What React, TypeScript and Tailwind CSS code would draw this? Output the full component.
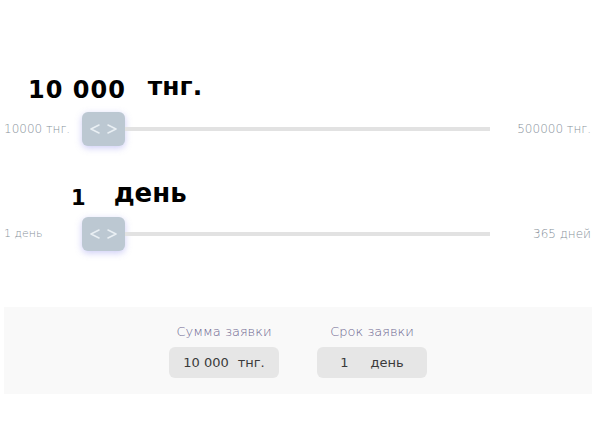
import React from "react";

const font = { fontFamily: "'DejaVu Sans', 'Open Sans', sans-serif" };

function Handle() {
  return (
    <div className="w-[43px] h-[34px] shrink-0 rounded-[6px] bg-[#bcc8d2] shadow-[0_2px_7px_rgba(110,110,230,0.35)] flex items-center justify-center">
      <svg width="28" height="10" viewBox="0 0 28 10" fill="none" stroke="#e9eff3" strokeWidth="1.6" strokeLinecap="round" strokeLinejoin="round">
        <polyline points="9,1 1,5 9,9" />
        <polyline points="18,1 26,5 18,9" />
      </svg>
    </div>
  );
}

function SliderRow({ left, right, leftSize }: { left: string; right: string; leftSize: string }) {
  return (
    <div className="flex items-center h-[34px]">
      <div className={`w-[82px] pl-[4px] ${leftSize} font-extralight text-[#87919a] whitespace-nowrap`}>{left}</div>
      <Handle />
      <div className="flex-1 h-[4px] bg-[#e2e2e2]" />
      <div className="w-[110px] pr-[9px] text-right text-[12px] font-extralight text-[#87919a] whitespace-nowrap">{right}</div>
    </div>
  );
}

export default function App() {
  return (
    <div className="w-[600px] h-[440px] bg-white overflow-hidden" style={font}>
      <div className="pt-[74px]">
        <div className="flex items-start h-[34px] pl-[28px] text-black font-bold">
          <span className="text-[24px] leading-[30px] pt-[1px] tracking-[1px]">10 000</span>
          <span className="text-[25px] leading-[26px] ml-[22px]">тнг.</span>
        </div>
        <div className="mt-[4px]">
          <SliderRow left="10000 тнг." right="500000 тнг." leftSize="text-[12px]" />
        </div>
        <div className="flex items-start h-[34px] mt-[32px] pl-[71px] text-black font-bold">
          <span className="text-[21px] leading-[30px] pt-[5px]">1</span>
          <span className="text-[26px] leading-[30px] ml-[28px]">день</span>
        </div>
        <div className="mt-[5px]">
          <SliderRow left="1 день" right="365 дней" leftSize="text-[11px]" />
        </div>
        <div className="mx-[4px] w-[588px] h-[87px] mt-[56px] bg-[#f9f9f9] flex justify-center gap-[38px] pt-[17px]">
          <div className="flex flex-col items-center w-[110px]">
            <div className="text-[13px] leading-[16px] text-[#6d6690] font-extralight whitespace-nowrap">Сумма заявки</div>
            <div className="mt-[7px] w-[110px] h-[31px] rounded-[6px] bg-[#e6e6e6] flex items-center justify-center text-[13px] text-[#3a3a3a] whitespace-nowrap">
              <span>10 000</span>
              <span className="ml-[9px]">тнг.</span>
            </div>
          </div>
          <div className="flex flex-col items-center w-[110px]">
            <div className="text-[13px] leading-[16px] text-[#6d6690] font-extralight whitespace-nowrap">Срок заявки</div>
            <div className="mt-[7px] w-[110px] h-[31px] rounded-[6px] bg-[#e6e6e6] flex items-center justify-center text-[13px] text-[#3a3a3a] whitespace-nowrap">
              <span>1</span>
              <span className="ml-[22px]">день</span>
            </div>
          </div>
        </div>
      </div>
    </div>
  );
}
